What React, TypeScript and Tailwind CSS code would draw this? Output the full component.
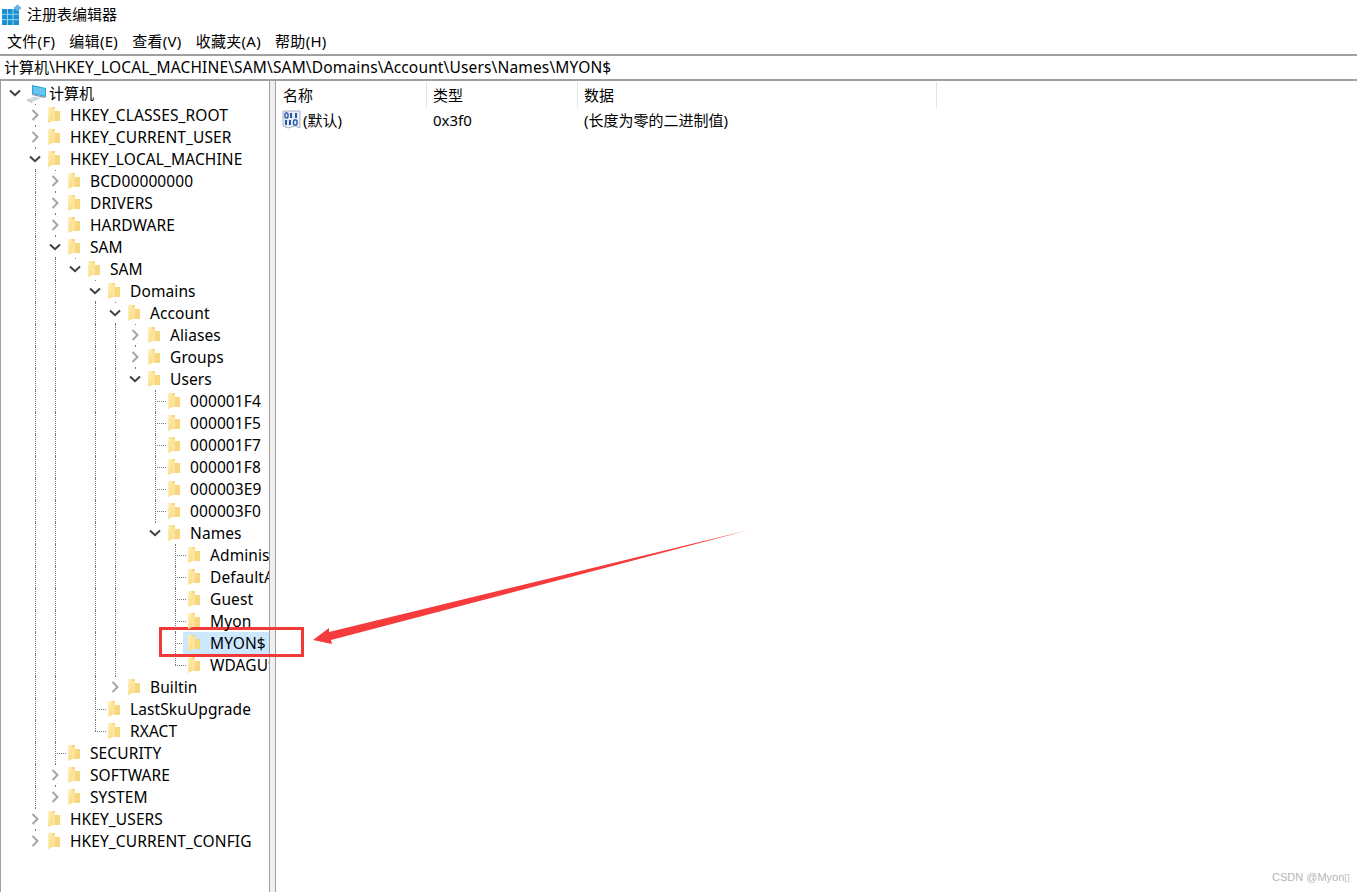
import React from 'react';

type TreeNode = {
  label: string;
  open?: boolean;
  closed?: boolean;
  selected?: boolean;
  children?: TreeNode[];
};

const leaf = (label: string, selected = false): TreeNode => ({ label, selected });
const shut = (label: string): TreeNode => ({ label, closed: true });

const roots: TreeNode[] = [
  shut('HKEY_CLASSES_ROOT'),
  shut('HKEY_CURRENT_USER'),
  {
    label: 'HKEY_LOCAL_MACHINE',
    open: true,
    children: [
      shut('BCD00000000'),
      shut('DRIVERS'),
      shut('HARDWARE'),
      {
        label: 'SAM',
        open: true,
        children: [
          {
            label: 'SAM',
            open: true,
            children: [
              {
                label: 'Domains',
                open: true,
                children: [
                  {
                    label: 'Account',
                    open: true,
                    children: [
                      shut('Aliases'),
                      shut('Groups'),
                      {
                        label: 'Users',
                        open: true,
                        children: [
                          leaf('000001F4'),
                          leaf('000001F5'),
                          leaf('000001F7'),
                          leaf('000001F8'),
                          leaf('000003E9'),
                          leaf('000003F0'),
                          {
                            label: 'Names',
                            open: true,
                            children: [
                              leaf('Administrator'),
                              leaf('DefaultAccount'),
                              leaf('Guest'),
                              leaf('Myon'),
                              leaf('MYON$', true),
                              leaf('WDAGUtilityAccount'),
                            ],
                          },
                        ],
                      },
                    ],
                  },
                  shut('Builtin'),
                ],
              },
              leaf('LastSkuUpgrade'),
              leaf('RXACT'),
            ],
          },
        ],
      },
      leaf('SECURITY'),
      shut('SOFTWARE'),
      shut('SYSTEM'),
    ],
  },
  shut('HKEY_USERS'),
  shut('HKEY_CURRENT_CONFIG'),
];

const Folder = () => (
  <svg width="13" height="18" viewBox="0 0 13 18" className="shrink-0">
    <defs>
      <linearGradient id="fold" x1="0" y1="0" x2="1" y2="1">
        <stop offset="0" stopColor="#fff3c0" />
        <stop offset="1" stopColor="#fad97e" />
      </linearGradient>
    </defs>
    <path d="M1 1H8V5H13V15H5L1 17Z" fill="#f8d87f" />
    <path d="M1 1H5V15L1 17Z" fill="url(#fold)" />
    <path d="M5 3H8V15H5Z" fill="#fce49c" />
  </svg>
);

const Chevron = ({ open }: { open: boolean }) =>
  open ? (
    <svg width="12" height="8" viewBox="0 0 12 8">
      <path d="M1 1.5L6 6.2L11 1.5" fill="none" stroke="#404040" strokeWidth="2" />
    </svg>
  ) : (
    <svg width="8" height="12" viewBox="0 0 8 12">
      <path d="M1.5 1L6.5 6L1.5 11" fill="none" stroke="#a6a6a6" strokeWidth="2" />
    </svg>
  );

const ComputerIcon = () => (
  <svg width="21" height="19" viewBox="0 0 21 19" className="shrink-0">
    <path d="M6 1L20 4V13L6 10Z" fill="#2f9fdc" />
    <path d="M7 2.2L19 4.8V11.8L7 9.2Z" fill="#66c5ee" />
    <path d="M6 10L20 13L18 14L6 11Z" fill="#8a97a3" />
    <path d="M1 15.5L9 12.5L15 14.5L6 18Z" fill="#d4d8dc" />
    <path d="M1 15.5L6 18V19L1 16.5Z" fill="#a9afb5" />
  </svg>
);

const Row = ({
  node,
  depth,
  guides,
  last,
}: {
  node: TreeNode;
  depth: number;
  guides: number[];
  last: boolean;
}) => {
  const col = 15 + depth * 20;
  const expandable = node.open || node.closed;
  return (
    <>
      <div className="relative flex h-[22px] items-center whitespace-nowrap">
        {guides.map((g) => (
          <span key={g} className="absolute top-0 bottom-0 border-l border-dotted border-[#7a7a7a]" style={{ left: g }} />
        ))}
        <span
          className={`absolute top-0 border-l border-dotted border-[#7a7a7a] ${last ? 'h-[11px]' : 'h-[22px]'}`}
          style={{ left: col }}
        />
        {!expandable && (
          <span className="absolute top-[11px] w-[11px] border-t border-dotted border-[#7a7a7a]" style={{ left: col }} />
        )}
        <span className="shrink-0" style={{ width: col - 8 }} />
        <span className="relative z-10 flex h-5 w-4 shrink-0 items-center justify-center">
          {expandable && (
            <span className="flex h-5 w-4 items-center justify-center bg-white">
              <Chevron open={!!node.open} />
            </span>
          )}
        </span>
        <div className={`relative z-10 flex h-[22px] flex-1 items-center pl-1 ${node.selected ? 'bg-[#cce8ff]' : ''}`}>
          <Folder />
          <span className="ml-[10px] text-[15.5px] tracking-[0.1px]">{node.label}</span>
        </div>
      </div>
      {node.children?.map((child, i) => (
        <Row
          key={child.label + i}
          node={child}
          depth={depth + 1}
          guides={last ? guides : [...guides, col]}
          last={i === node.children!.length - 1}
        />
      ))}
    </>
  );
};

const App: React.FC = () => {
  return (
    <div className="relative flex h-[892px] w-[1357px] flex-col overflow-hidden bg-white font-['Noto_Sans','Noto_Sans_CJK_SC',sans-serif] text-[15px] leading-[22px] text-black">
      {/* title bar */}
      <div className="flex h-[30px] items-center pb-[2px] pl-[2px]">
        <svg width="20" height="21" viewBox="0 0 20 21" className="shrink-0">
          <rect x="0" y="5" width="17" height="16" fill="#1b8fd0" />
          <path d="M5.5 5V21M11 5V21M0 10.3H17M0 15.6H17" stroke="#8fd3f2" strokeWidth="1" />
          <path d="M15.5 0.5L19.5 4L15.5 7.5L11.5 4Z" fill="#5fb4e4" />
        </svg>
        <span className="ml-[5px]">注册表编辑器</span>
      </div>

      {/* menu */}
      <div className="flex h-6 items-center gap-[14px] pb-[2px] pl-[7px] tracking-[0.3px]">
        <span>文件(F)</span>
        <span>编辑(E)</span>
        <span>查看(V)</span>
        <span>收藏夹(A)</span>
        <span>帮助(H)</span>
      </div>

      {/* address bar */}
      <div className="flex h-[27px] shrink-0 items-center border-y-2 border-[#a0a0a0] pb-px pl-1">
        计算机<span className="text-[15.5px] tracking-[0.15px]">\HKEY_LOCAL_MACHINE\SAM\SAM\Domains\Account\Users\Names\MYON$</span>
      </div>

      <div className="flex min-h-0 flex-1">
        {/* key tree */}
        <div className="w-[269px] shrink-0 overflow-hidden border-l border-[#a0a0a0] pt-px">
          <div className="-ml-px">
            <div className="relative flex h-[22px] items-center">
              <span className="w-[7px] shrink-0" />
              <span className="flex h-5 w-4 shrink-0 items-center justify-center">
                <Chevron open />
              </span>
              <span className="ml-[3px]">
                <ComputerIcon />
              </span>
              <span className="ml-[2px]">计算机</span>
            </div>
            {roots.map((node, i) => (
              <Row key={node.label} node={node} depth={1} guides={[]} last={i === roots.length - 1} />
            ))}
          </div>
        </div>

        {/* splitter */}
        <div className="w-[7px] shrink-0 border-x border-[#a0a0a0] bg-[#f0f0f0]" />

        {/* values */}
        <div className="min-w-0 flex-1 pt-px">
          <div className="flex h-[26px] items-center">
            <div className="h-full w-[151px] border-r border-[#e5e5e5] pl-[7px] leading-[27px]">名称</div>
            <div className="h-full w-[151px] border-r border-[#e5e5e5] pl-[6px] leading-[27px]">类型</div>
            <div className="h-full w-[359px] border-r border-[#e5e5e5] pl-[6px] leading-[27px]">数据</div>
          </div>
          <div className="mt-px flex h-[22px] items-center">
            <div className="flex w-[151px] items-center pl-[6px]">
              <svg width="19" height="19" viewBox="0 0 19 19" className="mb-[2px] shrink-0">
                <path d="M1 1H18V18L13 16L6 18L1 16Z" fill="#e6ebf5" stroke="#a9b4c8" />
                <rect x="3" y="3" width="3" height="5" rx="1.2" fill="none" stroke="#2a58a8" strokeWidth="1.4" />
                <rect x="8" y="3" width="2" height="5" fill="#2a58a8" />
                <rect x="13" y="3" width="2" height="5" fill="#2a58a8" />
                <rect x="3" y="10" width="2" height="5" fill="#2a58a8" />
                <rect x="7" y="10" width="2" height="5" fill="#2a58a8" />
                <rect x="11.5" y="10" width="3.5" height="5" rx="1.2" fill="none" stroke="#2a58a8" strokeWidth="1.4" />
              </svg>
              <span className="ml-[2px]">(默认)</span>
            </div>
            <div className="w-[151px] pl-[6px]">0x3f0</div>
            <div className="pl-[6px]">(长度为零的二进制值)</div>
          </div>
        </div>
      </div>

      {/* red annotation over the screenshot */}
      <div className="absolute top-[627px] left-[159px] h-[30px] w-[145px] border-[3px] border-[#f03a3a]" />
      <svg className="absolute top-0 left-0" width="1357" height="892" viewBox="0 0 1357 892">
        <path d="M749 530L329 632L329 628L313 640L332 644L331 640Z" fill="#f53b3b" />
      </svg>

      <span className="absolute top-[869px] left-[1272px] font-['Liberation_Sans',sans-serif] text-[11px] leading-4 text-[#b5b5b5]">
        CSDN @Myon▯
      </span>
    </div>
  );
};

export default App;
